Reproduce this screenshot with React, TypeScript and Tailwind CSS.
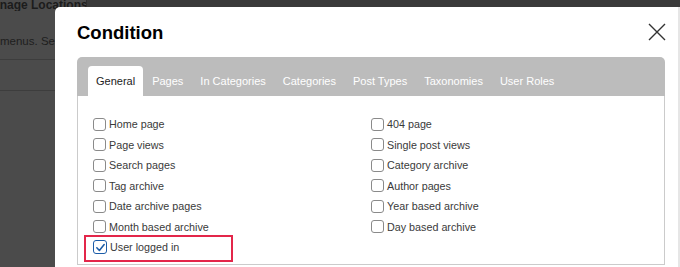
import React from 'react';

const leftItems = [
  'Home page',
  'Page views',
  'Search pages',
  'Tag archive',
  'Date archive pages',
  'Month based archive',
];

const rightItems = [
  '404 page',
  'Single post views',
  'Category archive',
  'Author pages',
  'Year based archive',
  'Day based archive',
];

const tabs = ['General', 'Pages', 'In Categories', 'Categories', 'Post Types', 'Taxonomies', 'User Roles'];

const Box: React.FC<{ checked?: boolean }> = ({ checked }) =>
  checked ? (
    <span className="w-[14px] h-[14px] rounded-[3px] border-[1.5px] border-[#1b5ca8] flex items-center justify-center shrink-0 bg-white">
      <svg width="11" height="11" viewBox="0 0 12 12" fill="none">
        <path d="M2 6.3 L4.8 9.2 L10 2.8" stroke="#1b5ca8" strokeWidth="1.7" strokeLinecap="round" strokeLinejoin="round" />
      </svg>
    </span>
  ) : (
    <span className="w-[13px] h-[13px] rounded-[3px] border border-[#8a8a8a] shrink-0 bg-white" />
  );

const Row: React.FC<{ label: string; checked?: boolean }> = ({ label, checked }) => (
  <div className="h-[20.5px] flex items-center gap-[3px] text-[10.75px] text-[#3a3a3a]">
    <Box checked={checked} />
    <span>{label}</span>
  </div>
);

export default function App() {
  return (
    <div className="relative w-[680px] h-[267px] overflow-hidden bg-[#4b4b4b] font-['Liberation_Sans',Arial,sans-serif]">
      {/* page behind the overlay */}
      <div className="flex items-start">
        <div className="w-[86px] shrink-0 overflow-hidden">
          <div className="ml-[-17px] mt-[-1px] whitespace-nowrap text-[12px] leading-[12px] font-bold text-[#1c1c1c]">
            Manage Locations
          </div>
        </div>
        <div className="flex-1 h-[7px] bg-[#3a3a3a] border-l border-[#2e2e2e]" />
      </div>
      <div className="w-[55px] overflow-hidden">
        <div className="mt-[24px] whitespace-nowrap text-[11.5px] leading-[12px] text-[#1e1e1e]">menus. Select</div>
        <div className="mt-[12px] h-px bg-[#3d3d3d]" />
        <div className="mt-[30px] h-px bg-[#3d3d3d]" />
      </div>

      {/* dialog */}
      <div className="absolute left-[55px] top-[7px] right-0 bottom-[-20px] bg-white rounded-tl-[5px] border-r-[2px] border-[#e6e6e6]">
        <div className="flex items-center justify-between pl-[22px] pr-[11px] pt-[12px] h-[40px]">
          <h2 className="text-[18.5px] leading-[28px] font-bold text-black">Condition</h2>
          <svg width="20" height="20" viewBox="0 0 20 20" className="mt-[-2px]">
            <path d="M2 2 L18 18 M18 2 L2 18" stroke="#333" strokeWidth="1.4" />
          </svg>
        </div>

        <div className="ml-[22px] mt-[10px] w-[588px]">
          <div className="h-[39px] bg-[#bcbcbc] rounded-t-[5px] flex items-end pl-[11px] gap-px">
            {tabs.map((t, i) => (
              <div
                key={t}
                className={
                  i === 0
                    ? 'h-[30px] px-[8px] flex items-center bg-white rounded-t-[4px] text-[11px] text-[#222]'
                    : 'h-[30px] px-[8px] flex items-center text-[11px] text-white'
                }
              >
                {t}
              </div>
            ))}
          </div>
          <div className="h-[169px] border-x border-b border-[#cbcbcb] px-[15px] pt-[18px] grid grid-cols-2">
            <div>
              {leftItems.map(l => (
                <Row key={l} label={l} />
              ))}
              <div className="relative">
                <Row label="User logged in" checked />
                <span className="absolute left-[-9px] top-[-2px] w-[149px] h-[27px] border-2 border-[#e3264a]" />
              </div>
            </div>
            <div>
              {rightItems.map(l => (
                <Row key={l} label={l} />
              ))}
            </div>
          </div>
        </div>
      </div>
    </div>
  );
}
